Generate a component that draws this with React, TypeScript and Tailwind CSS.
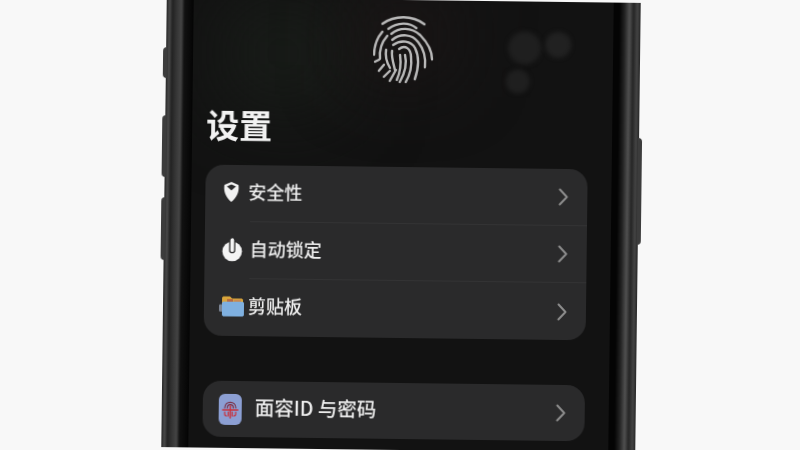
const FONT = "font-['Noto_Sans_CJK_SC','Liberation_Sans',sans-serif]";

function Fingerprint() {
  return (
    <svg width="62" height="70" viewBox="0 0 62 70" fill="none" stroke="#b9b9b9" strokeWidth="2.4" strokeLinecap="round">
      <path d="M9 9C21 0 39 0 51 9" />
      <path d="M15 14C24 7 36 7 43 13" />
      <path d="M9 17C4 23 1 31 1 40" />
      <path d="M18 19C26 12 38 12 47 20C54 27 59 34 59 44" />
      <path d="M14 21C8 28 6 35 7 44" />
      <path d="M19 25C27 18 39 19 45 27C50 33 53 41 52 52" />
      <path d="M13 35C12 41 14 48 17 53" />
      <path d="M20 30C28 24 38 26 42 33C46 41 46 52 42 64" />
      <path d="M19 36C18 42 21 50 22 55" />
      <path d="M26 34C32 29 38 34 38 42C39 50 38 58 33 67" />
      <path d="M27 40C28 47 28 56 24 65" />
      <path d="M32 40C34 48 32 58 27 67" />
      <path d="M2 47L6 45" />
      <path d="M6 56L11 50" />
      <path d="M11 62L17 56" />
      <path d="M17 66L23 55" />
    </svg>
  );
}

function ShieldIcon() {
  return (
    <svg className="mr-[3px]" width="16" height="20" viewBox="0 0 16 20">
      <path d="M8 0L15 3C16 9 14 15 8 20C2 15 0 9 1 3Z" fill="#f2f2f2" />
      <path d="M3.5 4.5L8 2.5L12.5 4.5L8 8.5Z" fill="#2b2b2c" />
    </svg>
  );
}

function LockTimerIcon() {
  return (
    <svg width="21" height="25" viewBox="0 0 21 25">
      <circle cx="10.5" cy="14.5" r="9.8" fill="#f4f4f4" />
      <rect x="8" y="0.7" width="5" height="15" rx="2.5" fill="#f4f4f4" stroke="#2b2b2c" strokeWidth="1.3" />
    </svg>
  );
}

function FolderIcon() {
  return (
    <svg width="25" height="21" viewBox="0 0 25 20" preserveAspectRatio="none">
      <path d="M3 2.5C3 1 4 0.5 5 0.5H11L13 2.5H22C23 2.5 24 3 24 4V10H3Z" fill="#d9a53a" />
      <rect x="8" y="3" width="6" height="4" fill="#b8683f" />
      <rect x="15" y="3.5" width="7" height="3.5" fill="#c98a52" />
      <rect x="0" y="8" width="4" height="7" rx="1" fill="#7b8493" />
      <path d="M3 7C3 6 4 5.5 5 5.5H23C24 5.5 25 6 25 7V17.5C25 18.8 24 19.5 23 19.5H5C4 19.5 3 18.8 3 17.5Z" fill="#7fb0e0" />
    </svg>
  );
}

function FaceIdIcon() {
  return (
    <div className="flex h-[31px] w-[23px] items-center justify-center rounded-[6px] bg-[#8c9fd3]">
      <svg width="17" height="21" viewBox="0 0 17 21" fill="none" stroke="#7a2f46" strokeWidth="1.2" strokeLinecap="round">
        <path d="M3 9C3 1.5 14 1.5 14 9" />
        <path d="M5.5 9C5.5 4.5 11.5 4.5 11.5 9" />
        <path d="M1 11H16" stroke="#c8323c" strokeWidth="1.6" />
        <path d="M3 13V15C3 16 4 17 5 17" stroke="#c8323c" />
        <path d="M14 13V15C14 16 13 17 12 17" stroke="#c8323c" />
        <path d="M8.5 7V19" stroke="#c8323c" strokeWidth="1.5" />
        <path d="M6.5 13V17" stroke="#c8323c" />
        <path d="M10.5 13V17" stroke="#c8323c" />
      </svg>
    </div>
  );
}

function Chevron() {
  return (
    <svg width="10" height="18" viewBox="0 0 10 18" fill="none" stroke="#8c8c8c" strokeWidth="2" strokeLinecap="round" strokeLinejoin="round">
      <path d="M1.5 1.5L8.5 9L1.5 16.5" />
    </svg>
  );
}

function Row({ icon, label, gap, divider }: { icon: React.ReactNode; label: string; gap: string; divider?: boolean }) {
  return (
    <div className="flex h-[57px] flex-col">
      <div className="flex flex-1 items-center pl-[14px] pr-[19px]">
        <div className="flex w-[27px] shrink-0 justify-center pb-[2px]">{icon}</div>
        <span className={`flex-1 pb-[5px] text-[18px] font-medium leading-none text-[#eeeeee] ${gap}`}>{label}</span>
        <Chevron />
      </div>
      {divider && <div className="ml-[45px] h-px bg-[#333334]" />}
    </div>
  );
}

export default function App() {
  return (
    <div className={`h-[450px] w-[800px] overflow-hidden bg-[#f8f8f8] ${FONT}`}>
      <div className="relative ml-[164px] h-[450px] w-[474px] rotate-[0.7deg] blur-[0.4px]">
        {/* side buttons */}
        <div className="absolute left-[-3px] top-[50px] h-[31px] w-[4px] rounded-l-sm bg-[#3c3c3c]" />
        <div className="absolute left-[-3px] top-[118px] h-[62px] w-[4px] rounded-l-sm bg-[#3c3c3c]" />
        <div className="absolute left-[-3px] top-[200px] h-[63px] w-[4px] rounded-l-sm bg-[#3c3c3c]" />
        <div className="absolute right-[-3px] top-[135px] h-[107px] w-[4px] rounded-r-sm bg-[#3c3c3c]" />

        <div className="flex h-full bg-[linear-gradient(90deg,#262626_0px,#4a4a4a_3px,#222222_6px,#333333_10px,#444444_15px,#111111_18px,#040404_27px,#040404_453px,#222222_458px,#505050_463px,#252525_467px,#444444_471px,#262626_474px)] px-[27px]">
          <div className="relative flex w-full flex-col overflow-hidden bg-[#121212] pl-[14px] pr-[24px]">
            {/* blurred wallpaper behind the sheet */}
            <div className="absolute left-[30px] top-0 h-[110px] w-[120px] bg-[#191d19] blur-2xl" />
            <div className="absolute left-[170px] top-0 h-[70px] w-[80px] bg-[#201919] blur-2xl" />
            <div className="absolute left-[315px] top-[30px] h-[33px] w-[33px] rounded-full bg-[#1f1f1f] blur-[2px]" />
            <div className="absolute left-[352px] top-[30px] h-[26px] w-[26px] rounded-full bg-[#212121] blur-[2px]" />
            <div className="absolute left-[313px] top-[68px] h-[24px] w-[24px] rounded-full bg-[#1f1f1f] blur-[2px]" />

            <div className="relative flex justify-center pl-[12px] pt-[15px]">
              <Fingerprint />
            </div>
            <h1 className="relative mt-[18px] text-[33px] font-bold leading-[46px] text-[#f2f2f2]">设置</h1>
            <div className="relative mt-[18px] rounded-[18px] bg-[#2a2a2b]">
              <Row icon={<ShieldIcon />} label="安全性" gap="ml-[2px]" divider />
              <Row icon={<LockTimerIcon />} label="自动锁定" gap="ml-[4px]" divider />
              <Row icon={<FolderIcon />} label="剪贴板" gap="ml-[3px]" />
            </div>
            <div className="relative mt-[45px] rounded-[18px] bg-[#2a2a2b]">
              <div className="flex h-14 items-center pl-[16px] pr-[19px]">
                <FaceIdIcon />
                <span className="ml-[13px] flex-1 pb-[4px] text-[19.5px] font-medium leading-none text-[#eeeeee]">面容ID 与密码</span>
                <Chevron />
              </div>
            </div>
          </div>
        </div>
      </div>
    </div>
  );
}
